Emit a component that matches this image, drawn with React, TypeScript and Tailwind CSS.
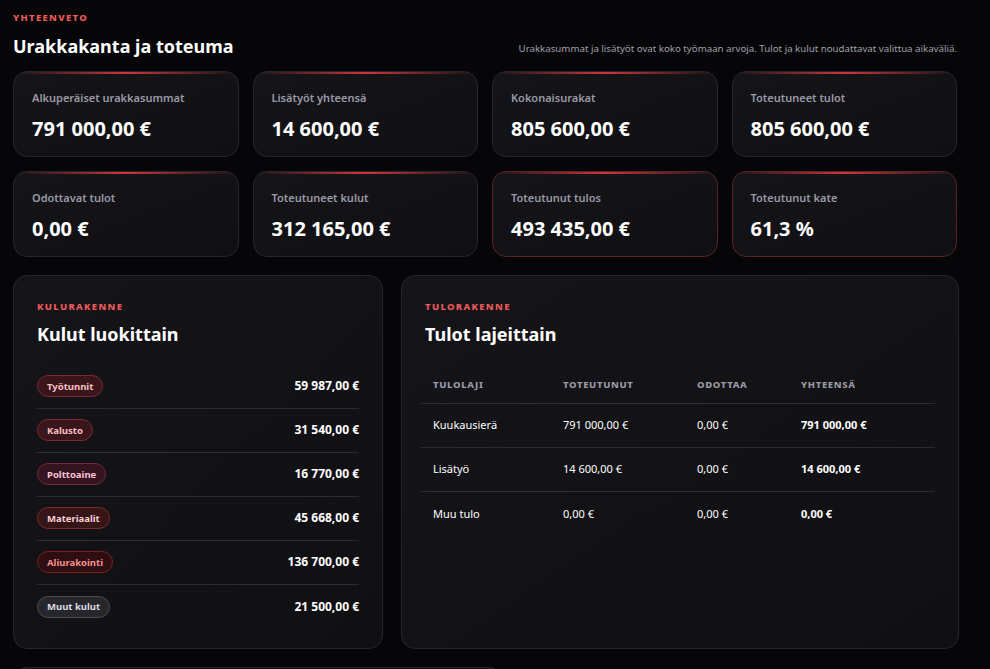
const stats = [
  { label: "Alkuperäiset urakkasummat", value: "791 000,00 €" },
  { label: "Lisätyöt yhteensä", value: "14 600,00 €" },
  { label: "Kokonaisurakat", value: "805 600,00 €" },
  { label: "Toteutuneet tulot", value: "805 600,00 €" },
  { label: "Odottavat tulot", value: "0,00 €" },
  { label: "Toteutuneet kulut", value: "312 165,00 €" },
  { label: "Toteutunut tulos", value: "493 435,00 €", accent: true },
  { label: "Toteutunut kate", value: "61,3 %", accent: true },
];

const costs = [
  { name: "Työtunnit", amount: "59 987,00 €", badge: "border-[#7a2a33] bg-[#3a151a] text-[#fbc0c4]" },
  { name: "Kalusto", amount: "31 540,00 €", badge: "border-[#7a2a33] bg-[#3a151a] text-[#fbc0c4]" },
  { name: "Polttoaine", amount: "16 770,00 €", badge: "border-[#6e2a40] bg-[#35141f] text-[#f8c4d8]" },
  { name: "Materiaalit", amount: "45 668,00 €", badge: "border-[#7a2a2a] bg-[#361516] text-[#fbd0d8]" },
  { name: "Aliurakointi", amount: "136 700,00 €", badge: "border-[#7a1f22] bg-[#2e0e10] text-[#f79090]" },
  { name: "Muut kulut", amount: "21 500,00 €", badge: "border-[#4a4a52] bg-[#26262b] text-[#dcdce4]" },
];

const income = [
  { type: "Kuukausierä", done: "791 000,00 €", pending: "0,00 €", total: "791 000,00 €" },
  { type: "Lisätyö", done: "14 600,00 €", pending: "0,00 €", total: "14 600,00 €" },
  { type: "Muu tulo", done: "0,00 €", pending: "0,00 €", total: "0,00 €" },
];

function StatCard({ label, value, accent }: { label: string; value: string; accent?: boolean }) {
  return (
    <div
      className={`relative h-[86px] overflow-hidden rounded-[14px] border bg-gradient-to-br from-[#151519] to-[#101013] px-[18px] pt-[18px] ${
        accent ? "border-[#5a2228]" : "border-[#26262c]"
      }`}
    >
      <div className="absolute inset-x-0 top-0 h-[2px] bg-gradient-to-r from-transparent via-[#d2343c] to-transparent" />
      <div className="text-[11px] font-semibold text-[#9a9aa6]">{label}</div>
      <div className="mt-[8px] text-[20px] font-bold leading-[27px] text-white">{value}</div>
    </div>
  );
}

function Eyebrow({ children }: { children: string }) {
  return <div className="text-[9.5px] font-extrabold uppercase tracking-[0.14em] text-[#f05a5a]">{children}</div>;
}

export default function App() {
  return (
    <div
      className="min-h-screen bg-[#060608] pb-10 text-white"
      style={{ fontFamily: '"Noto Sans", "Open Sans", sans-serif' }}
    >
      <div className="w-[944px] pl-[13px] pt-[11px] box-content">
        <Eyebrow>Yhteenveto</Eyebrow>
        <div className="mt-[8px] flex items-end justify-between">
          <h1 className="text-[18px] font-bold leading-[26px]">Urakkakanta ja toteuma</h1>
          <p className="pb-[3px] text-[9.7px] text-[#a0a0ac]">
            Urakkasummat ja lisätyöt ovat koko työmaan arvoja. Tulot ja kulut noudattavat valittua aikaväliä.
          </p>
        </div>

        <div className="mt-[12px] grid grid-cols-4 gap-x-[14px] gap-y-[14px]">
          {stats.map((s) => (
            <StatCard key={s.label} {...s} />
          ))}
        </div>

        <div className="mt-[18px] grid grid-cols-[370px_1fr] gap-[18px]">
          <section className="h-[374px] rounded-[14px] border border-[#26262c] bg-gradient-to-br from-[#151519] to-[#101013] px-[23px] pt-[24px]">
            <Eyebrow>Kulurakenne</Eyebrow>
            <h2 className="mt-[7px] text-[18px] font-bold leading-[24px]">Kulut luokittain</h2>
            <ul className="mt-[19px]">
              {costs.map((c, i) => (
                <li
                  key={c.name}
                  className={`flex h-[44px] items-center justify-between ${
                    i < costs.length - 1 ? "border-b border-[#2c2c33]" : ""
                  }`}
                >
                  <span className={`rounded-full border px-[9px] py-[3.5px] text-[9.5px] font-bold leading-[13px] ${c.badge}`}>
                    {c.name}
                  </span>
                  <span className="text-[12px] font-bold">{c.amount}</span>
                </li>
              ))}
            </ul>
          </section>

          <section className="h-[374px] rounded-[14px] border border-[#26262c] bg-gradient-to-br from-[#151519] to-[#101013] px-[23px] pt-[24px]">
            <Eyebrow>Tulorakenne</Eyebrow>
            <h2 className="mt-[7px] text-[18px] font-bold leading-[24px]">Tulot lajeittain</h2>
            <table className="mt-[22px] -ml-[4px] w-[514px] border-collapse text-left">
              <thead>
                <tr className="border-b border-[#2c2c33] text-[9.5px] uppercase tracking-[0.07em] text-[#9a9aa6]">
                  <th className="h-[36px] w-[142px] pl-[12px] font-extrabold">Tulolaji</th>
                  <th className="w-[134px] font-extrabold">Toteutunut</th>
                  <th className="w-[104px] font-extrabold">Odottaa</th>
                  <th className="font-extrabold">Yhteensä</th>
                </tr>
              </thead>
              <tbody className="text-[11px]">
                {income.map((r, i) => (
                  <tr key={r.type} className={i < income.length - 1 ? "border-b border-[#2c2c33]" : ""}>
                    <td className="h-[44px] pl-[12px]">{r.type}</td>
                    <td>{r.done}</td>
                    <td>{r.pending}</td>
                    <td className="font-bold">{r.total}</td>
                  </tr>
                ))}
              </tbody>
            </table>
          </section>
        </div>

        <section className="mt-[18px] h-[120px] w-[490px] rounded-[14px] border border-[#26262c] bg-[#121216]" />
      </div>
    </div>
  );
}
